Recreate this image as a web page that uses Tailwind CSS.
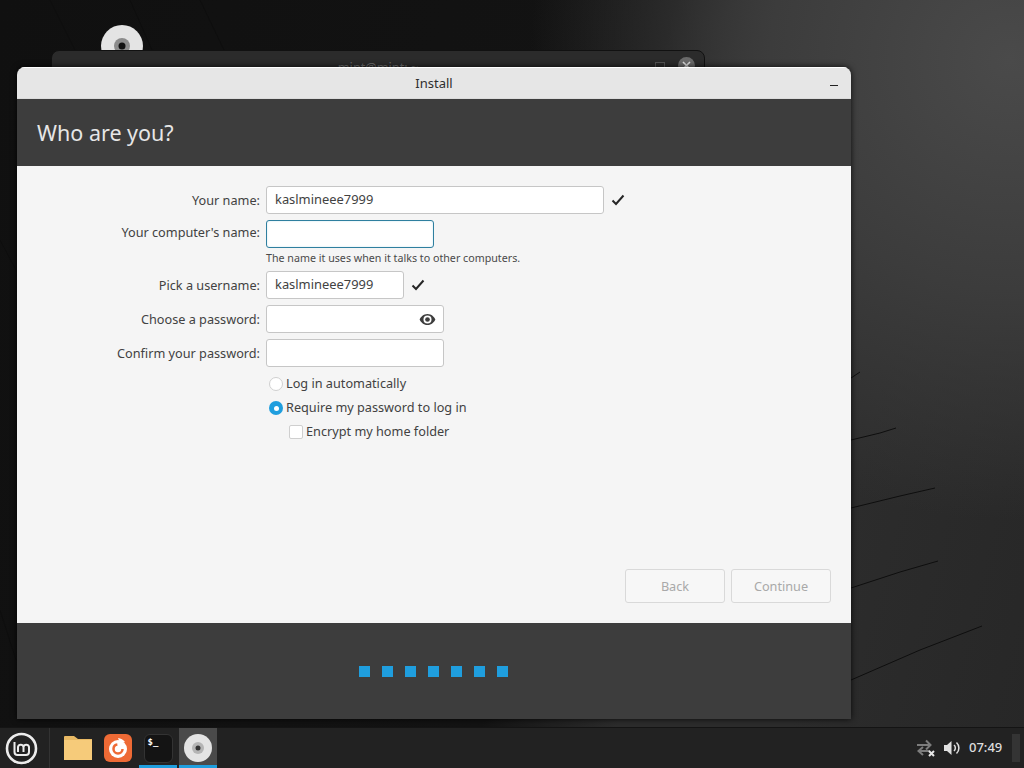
<!DOCTYPE html>
<html lang="en">
<head>
<meta charset="utf-8">
<title>Install</title>
<script src="https://cdn.jsdelivr.net/npm/@tailwindcss/browser@4"></script>
</head>
<body class="m-0 overflow-hidden bg-[#141414]">
<div class="relative w-[1024px] h-[768px] overflow-hidden font-['Noto_Sans',sans-serif] text-[12.7px] text-[#424242] bg-[radial-gradient(ellipse_480px_460px_at_1010px_60px,#4a4a4a_0%,#3c3c3c_50%,rgba(45,45,45,0)_100%),linear-gradient(105deg,#101010_0%,#131313_55%,#2c2c2c_66%,#2c2c2c_80%,#272727_100%)]">

  <!-- wallpaper cracks -->
  <svg class="absolute inset-0" width="1024" height="768" fill="none" stroke="#0e0e0e" stroke-width="1">
    <path d="M50 0 L75 50"/><path d="M130 0 L152 50"/><path d="M200 0 L224 50"/>
    <path d="M851 378 L860 372"/><path d="M851 440 L880 433 L896 428"/><path d="M851 508 L900 496 L935 488"/><path d="M851 588 L900 572 L938 561"/><path d="M851 680 L920 650 L982 626"/>
    <path d="M0 610 L16 660"/><path d="M0 240 L16 270"/>
  </svg>

  <!-- desktop disc icon -->
  <svg class="absolute left-[101px] top-[25px]" width="42" height="42" viewBox="0 0 42 42">
    <circle cx="21" cy="21" r="21" fill="#e4e4e4"/>
    <circle cx="21" cy="21" r="8" fill="#8c8c8c"/>
    <circle cx="21" cy="21" r="3.5" fill="#111"/>
  </svg>

  <!-- terminal window behind -->
  <div class="absolute left-[51px] top-[50px] w-[654px] h-[60px] rounded-t-[8px] bg-[#2b2b2b] border border-[#111] flex justify-center pt-[7px]">
    <span class="text-[#6e6e6e]">mint@mint: ~</span>
    <span class="absolute left-[603px] top-[11px] w-[10px] h-[10px] border border-[#555]"></span>
    <span class="absolute left-[626px] top-[6px] w-[17px] h-[17px] rounded-full bg-[#6a6a6a] flex items-center justify-center">
      <svg width="9" height="9" viewBox="0 0 9 9" stroke="#ddd" stroke-width="1.6" fill="none"><path d="M1 1 L8 8 M8 1 L1 8"/></svg>
    </span>
  </div>

  <!-- installer window -->
  <div class="absolute left-[17px] top-[67px] w-[834px] h-[652px] flex flex-col rounded-t-[8px] overflow-hidden shadow-[0_0_6px_rgba(0,0,0,0.8)]">
    <div class="relative h-[32px] shrink-0 bg-[#e6e6e6] border-t border-t-white border-b border-b-[#dcdcdc] flex items-center justify-center pt-[1px] text-[13px] text-[#2e2e2e]">
      Install
      <span class="absolute right-[13px] top-[17px] w-[8px] h-[1px] bg-[#222]"></span>
    </div>
    <div class="h-[67px] shrink-0 bg-[#3d3d3d] flex items-center pl-[20px] pt-[1px] text-[21.500px] text-[#e6e6e6]">Who are you?</div>

    <div class="h-[457px] shrink-0 bg-[#f5f5f5] flex flex-col pt-[20px] px-[20px] pb-[20px]">
      <div class="grid grid-cols-[223px_auto] gap-x-[6px] justify-start items-start">
        <div class="h-[28px] pt-[2px] flex items-center justify-end">Your name:</div>
        <div class="h-[28px] flex items-center gap-[6px]">
          <div class="w-[338px] h-[28px] bg-white border border-[#c6c6c6] rounded-[3px] flex items-center pl-[8px] text-[12.900px]">kaslmineee7999</div>
          <svg width="16" height="16" viewBox="0 0 16 16" fill="none" stroke="#262626" stroke-width="2"><path d="M2.5 8.5 L6 12 L13.5 3.5"/></svg>
        </div>

        <div class="h-[28px] mt-[6px] flex items-start justify-end pt-[3px]">Your computer's name:</div>
        <div class="mt-[6px] w-[168px] h-[28px] bg-white border border-[#2f7f9f] rounded-[3px] shadow-[inset_0_0_2px_rgba(30,150,200,0.25)]"></div>

        <div></div>
        <div class="h-[23px] pt-[3px] text-[10.700px] leading-[15px] text-[#4a4a4a] whitespace-nowrap">The name it uses when it talks to other computers.</div>

        <div class="h-[28px] pt-[2px] flex items-center justify-end">Pick a username:</div>
        <div class="h-[28px] flex items-center gap-[6px]">
          <div class="w-[138px] h-[28px] bg-white border border-[#c6c6c6] rounded-[3px] flex items-center pl-[8px] text-[12.900px]">kaslmineee7999</div>
          <svg width="16" height="16" viewBox="0 0 16 16" fill="none" stroke="#262626" stroke-width="2"><path d="M2.5 8.5 L6 12 L13.5 3.5"/></svg>
        </div>

        <div class="h-[28px] mt-[6px] pt-[2px] flex items-center justify-end">Choose a password:</div>
        <div class="mt-[6px] w-[178px] h-[28px] bg-white border border-[#c6c6c6] rounded-[3px] flex items-center justify-end pr-[7px]">
          <svg width="17" height="17" viewBox="0 0 16 16"><path fill="#3d3d3d" fill-rule="evenodd" d="M8 2.8C4.200 2.800 1.600 5.600.6 8c1 2.400 3.600 5.200 7.400 5.200s6.400-2.800 7.400-5.200C14.400 5.600 11.800 2.800 8 2.800zM8 4.200a3.800 3.800 0 1 1 0 7.600 3.800 3.800 0 0 1 0-7.600z"/><circle cx="8" cy="8" r="2.200" fill="#3d3d3d"/></svg>
        </div>

        <div class="h-[28px] mt-[6px] pt-[2px] flex items-center justify-end">Confirm your password:</div>
        <div class="mt-[6px] w-[178px] h-[28px] bg-white border border-[#c6c6c6] rounded-[3px]"></div>

        <div></div>
        <div class="mt-[5px] flex flex-col">
          <div class="h-[24px] pl-[3px] flex items-center gap-[3px]">
            <span class="w-[14px] h-[14px] rounded-full bg-white border border-[#d0d0d0]"></span>
            <span>Log in automatically</span>
          </div>
          <div class="h-[24px] pl-[3px] flex items-center gap-[3px]">
            <span class="w-[14px] h-[14px] rounded-full bg-[#1f9ede] flex items-center justify-center"><span class="w-[5px] h-[5px] rounded-full bg-white"></span></span>
            <span>Require my password to log in</span>
          </div>
          <div class="h-[24px] pl-[23px] flex items-center gap-[3px]">
            <span class="w-[14px] h-[14px] rounded-[2px] bg-white border border-[#cfcfcf]"></span>
            <span>Encrypt my home folder</span>
          </div>
        </div>
      </div>

      <div class="mt-auto flex justify-end gap-[6px] text-[#a9a9a9]">
        <div class="w-[100px] h-[34px] pt-[2px] bg-[#f7f7f7] border border-[#d9d9d9] rounded-[3px] flex items-center justify-center">Back</div>
        <div class="w-[100px] h-[34px] pt-[2px] bg-[#f7f7f7] border border-[#d9d9d9] rounded-[3px] flex items-center justify-center">Continue</div>
      </div>
    </div>

    <div class="flex-1 bg-[#3d3d3d] flex items-center justify-center gap-[12px] pr-[2px]">
      <span class="w-[11px] h-[11px] bg-[#1f9ede]"></span>
      <span class="w-[11px] h-[11px] bg-[#1f9ede]"></span>
      <span class="w-[11px] h-[11px] bg-[#1f9ede]"></span>
      <span class="w-[11px] h-[11px] bg-[#1f9ede]"></span>
      <span class="w-[11px] h-[11px] bg-[#1f9ede]"></span>
      <span class="w-[11px] h-[11px] bg-[#1f9ede]"></span>
      <span class="w-[11px] h-[11px] bg-[#1f9ede]"></span>
    </div>
  </div>

  <!-- taskbar -->
  <div class="absolute left-0 right-0 bottom-0 h-[41px] bg-[#222222] border-t border-[#141414] flex items-stretch">
    <div class="w-[50px] shrink-0 border-r border-[#333] flex items-center justify-start pl-[5px]">
      <svg width="33" height="33" viewBox="0 0 33 33" fill="none" stroke="#ececec">
        <circle cx="16.500" cy="16.500" r="14.500" stroke-width="2.600"/>
        <path d="M9.500 10 V20 a3 3 0 0 0 3 3 H21 a3 3 0 0 0 3-3 V15 a2.800 2.800 0 0 0-5.500 0 V20 M18.500 15 a2.800 2.800 0 0 0-5.500 0 V20" stroke-width="2"/>
      </svg>
    </div>
    <div class="flex items-stretch pl-[8px]">
      <div class="w-[40px] flex items-center justify-center">
        <svg width="30" height="26" viewBox="0 0 30 26"><path fill="#e8b964" d="M1 2 Q1 1 2 1 H11 L15 4 H29 V25 H1Z"/><rect x="1" y="5" width="28" height="20" fill="#f6cb7a"/></svg>
      </div>
      <div class="w-[40px] flex items-center justify-center">
        <svg width="28" height="28" viewBox="0 0 28 28"><rect width="28" height="28" rx="6" fill="#ee6a35"/><circle cx="14" cy="15" r="9" fill="#fff"/><path d="M14 4 a10 10 0 0 1 7 4 L16 9Z" fill="#fff"/><circle cx="14" cy="15" r="4.500" fill="none" stroke="#ee6a35" stroke-width="2.500" stroke-dasharray="20 8"/></svg>
      </div>
      <div class="w-[40px] flex items-center justify-center relative">
        <div class="w-[29px] h-[29px] rounded-[6px] bg-[#141414] border border-[#333] text-white text-[9px] leading-[11px] font-bold pl-[3px] pt-[2px] font-['DejaVu_Sans_Mono',monospace]">$_</div>
        <span class="absolute left-[1px] right-[1px] bottom-0 h-[3px] bg-[#1f9ede]"></span>
      </div>
      <div class="w-[38px] ml-[1px] bg-[#4a4a4a] flex items-center justify-center relative">
        <svg width="30" height="30" viewBox="0 0 30 30"><circle cx="15" cy="15" r="14" fill="#e4e4e4"/><circle cx="15" cy="15" r="6" fill="#b5b5b5"/><circle cx="15" cy="15" r="2.500" fill="#333"/></svg>
        <span class="absolute left-0 right-0 bottom-0 h-[3px] bg-[#1f9ede]"></span>
      </div>
    </div>
    <div class="ml-auto flex items-center">
      <svg width="20" height="18" viewBox="0 0 20 18" fill="none" stroke="#7c7c7c" stroke-width="2" class="mr-[7px]">
        <path d="M1 6 H14 M10 1.500 L14.500 6 L10 10.500"/><path d="M14 12 H3 M7 8 L2.500 12 L7 16"/>
        <path d="M13 12 L18 17 M18 12 L13 17" stroke="#e6e6e6"/>
      </svg>
      <svg width="18" height="16" viewBox="0 0 18 16" class="mr-[8px]" fill="none" stroke="#e0e0e0" stroke-width="1.500">
        <path fill="#e0e0e0" stroke="none" d="M1 5 H4 L8.500 1 V15 L4 11 H1Z"/>
        <path d="M11 5 a4 4 0 0 1 0 6 M13.500 2.500 a7.500 7.500 0 0 1 0 11"/>
      </svg>
      <span class="text-[13px] font-medium text-[#dedede] w-[43px]">07:49</span>
      <span class="w-[8px] h-[28px] bg-[#343434] mr-[4px]"></span>
    </div>
  </div>
</div>
</body>
</html>
